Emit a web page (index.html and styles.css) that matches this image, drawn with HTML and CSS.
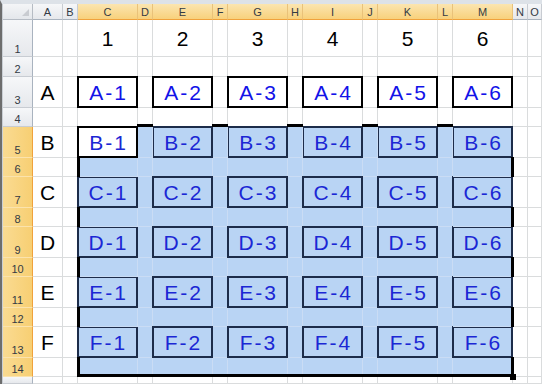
FILE: index.html
```html
<!DOCTYPE html>
<html lang="ja">
<head>
  <meta charset="UTF-8">
  <title>Sheet1</title>
  <link rel="stylesheet" href="styles.css">
</head>
<body>
  <div class="excel">
    <div class="sheet" id="sheet"></div>
  </div>

  <script>
    // build the worksheet grid: headers, cells, boxed labels and the selection C5:M14
    const COLS = 'ABCDEFGHIJKLMNO'.split('');
    const WIDE = ['C', 'E', 'G', 'I', 'K', 'M'];
    const LETTERS = 'ABCDEF';
    const sheet = document.getElementById('sheet');

    function add(cls, text) {
      const d = document.createElement('div');
      d.className = cls;
      if (text) d.textContent = text;
      sheet.appendChild(d);
      return d;
    }

    function selCol(i) { return i >= 2 && i <= 12; }
    function selRow(r) { return r >= 5 && r <= 14; }

    add('corner');
    COLS.forEach(function (c, i) {
      add('head col-head' + (selCol(i) ? ' on' : ''), c);
    });

    for (let r = 1; r <= 15; r++) {
      add('head row-head' + (selRow(r) ? ' on' : ''), r < 15 ? String(r) : '');

      COLS.forEach(function (c, i) {
        let cls = 'cell';
        const inSel = selCol(i) && selRow(r);
        if (inSel) cls += ' sel';
        if (c === 'C' && r === 5) cls += ' active';
        // selection outline pieces between the boxes
        if (r === 5 && inSel && WIDE.indexOf(c) < 0) cls += ' sel-top';
        if (c === 'C' && inSel && r % 2 === 0) cls += ' sel-left';
        if (c === 'M' && inSel && r % 2 === 0) cls += ' sel-right';
        if (r === 14 && inSel) cls += ' sel-bottom';

        const cell = add(cls);
        const w = WIDE.indexOf(c);

        if (r === 1 && w >= 0) cell.textContent = String(w + 1);

        if (r % 2 === 1 && r >= 3 && r <= 13) {
          const letter = LETTERS[(r - 3) / 2];
          if (c === 'A') cell.textContent = letter;
          if (w >= 0) {
            const box = document.createElement('div');
            box.className = 'box';
            box.textContent = letter + '-' + (w + 1);
            cell.appendChild(box);
          }
        }

        if (c === 'M' && r === 14) {
          const h = document.createElement('span');
          h.className = 'handle';
          cell.appendChild(h);
        }
      });
    }
  </script>
</body>
</html>
```

FILE: styles.css
```css
body {
  margin: 0;
}
.excel {
  width: 542px;
  height: 384px;
  box-sizing: border-box;
  border-top: 4px solid #dde2e8;
  border-left: 2px solid #6d6d6d;
  background: #fff;
  overflow: hidden;
  font-family: "Liberation Sans", Arial, sans-serif;
}
.sheet {
  display: grid;
  grid-template-columns: 30px 30px 15px repeat(6, 60px 15px) 1fr;
  grid-template-rows: 16px 37px 20px repeat(6, 31px 19px) 1fr;
  height: 380px;
  border-left: 1px solid #c9ced4;
}
.sheet > div {
  box-sizing: border-box;
  min-width: 0;
  min-height: 0;
}

/* headers */
.corner {
  position: relative;
  background: linear-gradient(#f4f5f7, #e4e7eb);
  border-right: 1px solid #b6bcc4;
  border-bottom: 1px solid #b6bcc4;
}
.corner::after {
  content: "";
  position: absolute;
  right: 3px;
  bottom: 3px;
  border-left: 7px solid transparent;
  border-bottom: 7px solid #c9ccd1;
}
.head {
  display: flex;
  justify-content: center;
  overflow: hidden;
  font-size: 11px;
  line-height: 12px;
  color: #333a44;
  background: linear-gradient(#f6f7f9, #e6e8ec);
  border-right: 1px solid #c8ccd2;
  border-bottom: 1px solid #c8ccd2;
}
.col-head {
  align-items: center;
  border-bottom-color: #a9b3bf;
}
.col-head.on {
  background: linear-gradient(#fbe5b0, #f8d17c);
  border-right-color: #e9c27a;
  border-bottom-color: #f0a23c;
}
.row-head {
  align-items: flex-end;
  padding-bottom: 1px;
  border-right-color: #a9b3bf;
}
.row-head.on {
  background: linear-gradient(90deg, #fadb92, #f7cf73);
  border-bottom-color: #fbe3ad;
  border-right-color: #f0a23c;
}

/* cells */
.cell {
  display: flex;
  align-items: center;
  justify-content: center;
  padding-top: 2px;
  font-size: 21px;
  color: #000;
  border-right: 1px solid #dadcdd;
  border-bottom: 1px solid #dadcdd;
}
.cell.sel {
  background: #b9d4f4;
  border-color: #cadcf4;
}
.cell.active {
  background: #fff;
}
.box {
  flex: 1;
  align-self: stretch;
  margin: -3px -1px -1px -1px;
  display: flex;
  align-items: center;
  justify-content: center;
  padding: 2px 0 0 2px;
  border: 2px solid #000;
  background: #fff;
  color: #1212e8;
  letter-spacing: 2px;
}
.sel .box {
  background: transparent;
  border-color: #1c2c4a;
  color: #1b27d4;
}
.active .box {
  background: #fff;
  border-color: #000;
}

/* selection outline */
.sel-top,
.sel-left,
.sel-right,
.sel-bottom {
  position: relative;
}
.sel-top::before {
  content: "";
  position: absolute;
  left: -1px;
  right: -1px;
  top: -3px;
  height: 3px;
  background: #000;
}
.sel-left::before {
  content: "";
  position: absolute;
  left: -1px;
  top: -1px;
  bottom: -1px;
  width: 3px;
  background: #000;
}
.sel-right::before {
  content: "";
  position: absolute;
  right: -2px;
  top: -1px;
  bottom: -1px;
  width: 3px;
  background: #000;
}
.sel-bottom::after {
  content: "";
  position: absolute;
  left: -1px;
  right: -2px;
  bottom: -1px;
  height: 3px;
  background: #000;
}
.handle {
  position: absolute;
  right: -4px;
  bottom: -4px;
  width: 6px;
  height: 6px;
  background: #000;
}
```
